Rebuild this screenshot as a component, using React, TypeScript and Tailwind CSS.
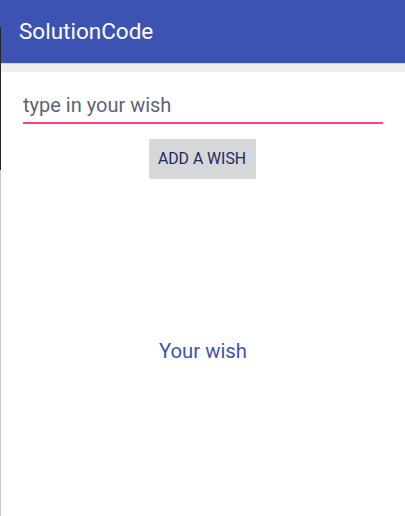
import React, { useState } from 'react';

const App: React.FC = () => {
  const [wish, setWish] = useState('');
  const [shown, setShown] = useState('Your wish');

  const addWish = () => {
    if (wish.trim()) setShown(wish);
  };

  return (
    <div className="flex h-[516px] w-[405px] overflow-hidden bg-white font-['Roboto',sans-serif]">
      {/* edge of the neighbouring window */}
      <div className="flex w-px flex-col">
        <div className="h-[27px] bg-[#3c53b4]" />
        <div className="h-[143px] bg-[#262626]" />
        <div className="flex-1 bg-[#c8c8c8]" />
      </div>
      <div className="flex flex-1 flex-col">
        <header className="flex h-[63px] items-center bg-[#3c53b4] pl-[18px]">
          <h1 className="text-[22.5px] leading-none text-white">SolutionCode</h1>
        </header>
        <div className="h-px bg-[#d4d4d4]" />
        <div className="h-[8px] bg-[#eeeeee]" />
        <main className="flex flex-1 flex-col items-center">
          <div className="mt-[18px] w-full pl-[22px] pr-[22px]">
            <input
              value={wish}
              onChange={(e) => setWish(e.target.value)}
              placeholder="type in your wish"
              className="block h-[34px] w-full border-b-2 border-[#ff4081] bg-transparent pb-[3px] text-[20px] text-[#3d4660] outline-none placeholder:text-[#5d6475]"
            />
          </div>
          <button
            onClick={addWish}
            className="mt-[15px] h-[40px] w-[107px] -translate-x-px rounded-[2px] bg-[#d6d7d8] text-[15.8px] text-[#1d2a63]"
          >
            ADD A WISH
          </button>
          <p className="mt-[157px] text-[20.3px] text-[#3c53b4]">{shown}</p>
        </main>
      </div>
    </div>
  );
};

export default App;
